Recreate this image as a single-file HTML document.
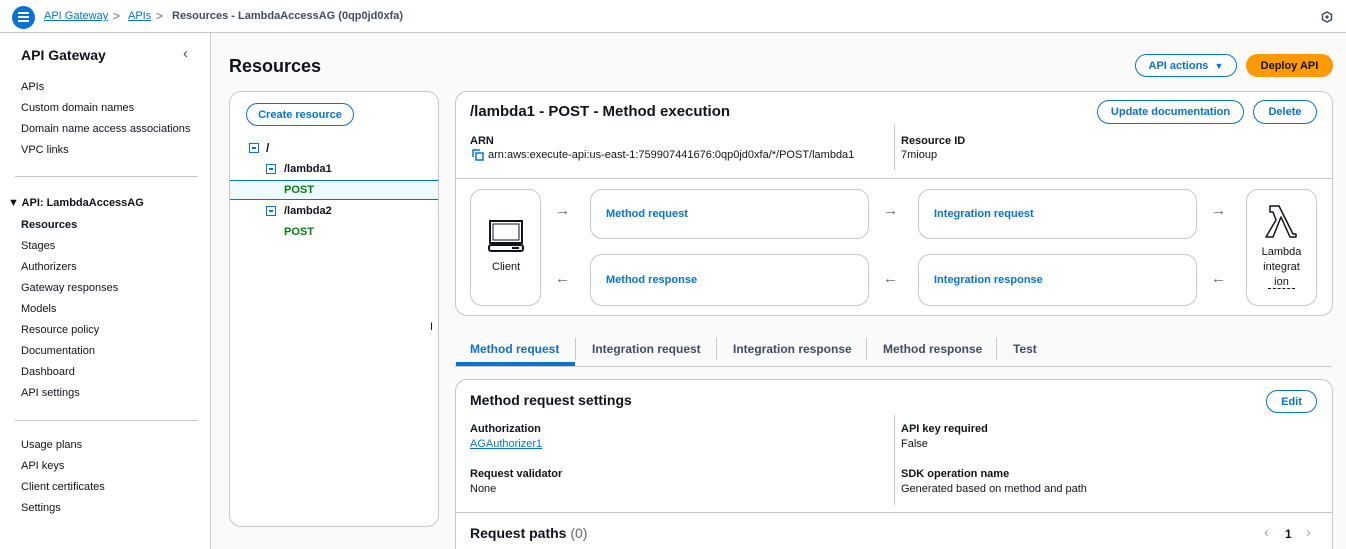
<!DOCTYPE html>
<html style="width:1346px;height:549px;overflow:hidden"><head><meta charset="utf-8"><style>
*{box-sizing:border-box;margin:0;padding:0}
body{width:1346px;height:549px;overflow:hidden;font-family:"Liberation Sans",sans-serif;color:#0f141a;background:#fafafa;position:relative;font-size:11px}
.a{position:absolute;white-space:nowrap}
.b{font-weight:bold}
.blue{color:#0972d3}
.btn{position:absolute;border:1.5px solid #0972d3;border-radius:14px;color:#0972d3;font-weight:bold;font-size:11px;display:flex;align-items:center;justify-content:center;background:#fff}
.box{position:absolute;border:1px solid #c6c6cd;border-radius:12px;background:#fff}
.nav{position:absolute;left:21px;font-size:11px;color:#0f141a}
.flow{position:absolute;border:1px solid #c6c6cd;border-radius:12px;background:#fff}
.fl{position:absolute;left:15px;top:50%;transform:translateY(-50%);color:#0972d3;font-weight:bold;font-size:11px}
.arr{position:absolute;color:#5f6b7a;font-size:15px}
.sq{position:absolute;width:10px;height:10px;border:1.5px solid #0972d3}
.sq:after{content:"";position:absolute;left:1.5px;top:3px;width:4px;height:1.5px;background:#0972d3}
</style></head><body>
<div class="a" style="left:0;top:0;width:1346px;height:33px;background:#fff;border-bottom:1px solid #c6c6cd"></div>
<div class="a" style="left:12px;top:6px;width:23px;height:23px;border-radius:50%;background:#0972d3"></div>
<div class="a" style="left:18px;top:12px;width:11px;height:2px;background:#fff;box-shadow:0 4px 0 #fff,0 8px 0 #fff"></div>
<div class="a blue" style="left:44px;top:10px;font-size:11px;text-decoration:underline">API Gateway</div>
<div class="a" style="left:113px;top:9px;color:#656871;font-size:12px">&gt;</div>
<div class="a blue" style="left:128px;top:10px;font-size:11px;text-decoration:underline">APIs</div>
<div class="a" style="left:156px;top:9px;color:#656871;font-size:12px">&gt;</div>
<div class="a" style="left:172px;top:10px;font-size:11px;color:#414d5c;font-weight:bold">Resources - LambdaAccessAG (0qp0jd0xfa)</div>
<svg class="a" style="left:1321px;top:11px" width="12" height="12" viewBox="0 0 12 12"><path d="M6 1l4.5 2.5v5L6 11 1.5 8.5v-5z" fill="none" stroke="#414d5c" stroke-width="1.5"/><circle cx="6" cy="6" r="1.6" fill="#414d5c"/></svg>

<div class="a" style="left:0;top:33px;width:211px;height:516px;background:#fff;border-right:1px solid #c6c6cd"></div>
<div class="a b" style="left:21px;top:47px;font-size:14px">API Gateway</div>
<div class="a" style="left:183px;top:45px;font-size:15px;color:#414d5c">&#8249;</div>
<div class="nav" style="top:81px">APIs</div>
<div class="nav" style="top:102px">Custom domain names</div>
<div class="nav" style="top:123px">Domain name access associations</div>
<div class="nav" style="top:144px">VPC links</div>
<div class="a" style="left:15px;top:176px;width:183px;height:1px;background:#c6c6cd"></div>
<div class="a b" style="left:8px;top:197px;font-size:11px">▼ API: LambdaAccessAG</div>
<div class="nav b blue" style="top:219px">Resources</div>
<div class="nav" style="top:240px">Stages</div>
<div class="nav" style="top:261px">Authorizers</div>
<div class="nav" style="top:282px">Gateway responses</div>
<div class="nav" style="top:303px">Models</div>
<div class="nav" style="top:324px">Resource policy</div>
<div class="nav" style="top:345px">Documentation</div>
<div class="nav" style="top:366px">Dashboard</div>
<div class="nav" style="top:387px">API settings</div>
<div class="a" style="left:15px;top:420px;width:183px;height:1px;background:#c6c6cd"></div>
<div class="nav" style="top:439px">Usage plans</div>
<div class="nav" style="top:460px">API keys</div>
<div class="nav" style="top:481px">Client certificates</div>
<div class="nav" style="top:502px">Settings</div>

<div class="a b" style="left:229px;top:56px;font-size:18px">Resources</div>
<div class="btn" style="left:1135px;top:54px;width:102px;height:23px">API actions&nbsp;&nbsp;<span style="font-size:9px">▼</span></div>
<div class="btn" style="left:1246px;top:54px;width:87px;height:23px;background:#ff9900;border-color:#ff9900;color:#0f141a">Deploy API</div>

<div class="box" style="left:229px;top:91px;width:210px;height:436px"></div>
<div class="btn" style="left:246px;top:103px;width:108px;height:23px">Create resource</div>
<div class="sq" style="left:249px;top:143px"></div><div class="a b" style="left:266px;top:141px;font-size:12px">/</div>
<div class="sq" style="left:266px;top:164px"></div><div class="a b" style="left:284px;top:163px;font-size:11px">/lambda1</div>
<div class="a" style="left:230px;top:180px;width:208px;height:20px;background:#f0fbff;border-top:1px solid #0972d3;border-bottom:1px solid #0972d3"></div>
<div class="a b" style="left:284px;top:184px;color:#037f0c">POST</div>
<div class="sq" style="left:266px;top:206px"></div><div class="a b" style="left:284px;top:205px;font-size:11px">/lambda2</div>
<div class="a b" style="left:284px;top:226px;color:#037f0c">POST</div>
<div class="a" style="left:430px;top:321px;font-size:11px">I</div>

<div class="box" style="left:455px;top:91px;width:878px;height:225px"></div>
<div class="a b" style="left:470px;top:103px;font-size:15px">/lambda1 - POST - Method execution</div>
<div class="btn" style="left:1097px;top:100px;width:147px;height:24px">Update documentation</div>
<div class="btn" style="left:1253px;top:100px;width:64px;height:24px">Delete</div>
<div class="a b" style="left:470px;top:135px">ARN</div>
<svg class="a" style="left:472px;top:149px" width="12" height="12"><path d="M1 8V1h7" fill="none" stroke="#0972d3" stroke-width="1.5"/><rect x="4" y="4" width="7" height="7" fill="none" stroke="#0972d3" stroke-width="1.5"/></svg>
<div class="a" style="left:488px;top:149px">arn:aws:execute-api:us-east-1:759907441676:0qp0jd0xfa/*/POST/lambda1</div>
<div class="a" style="left:894px;top:125px;width:1px;height:45px;background:#c6c6cd"></div>
<div class="a b" style="left:901px;top:135px">Resource ID</div>
<div class="a" style="left:901px;top:149px">7mioup</div>
<div class="a" style="left:456px;top:178px;width:876px;height:1px;background:#c6c6cd"></div>
<div class="flow" style="left:470px;top:189px;width:71px;height:117px"></div>
<svg class="a" style="left:488px;top:219px" width="36" height="34" viewBox="0 0 36 34"><rect x="2" y="2" width="32" height="22" fill="none" stroke="#0f141a" stroke-width="2"/><rect x="5" y="5" width="26" height="16" fill="none" stroke="#0f141a" stroke-width="1"/><rect x="1" y="26" width="34" height="6" rx="2" fill="none" stroke="#0f141a" stroke-width="2"/><rect x="24" y="28" width="7" height="2" fill="#0f141a"/></svg>
<div class="a" style="left:492px;top:261px">Client</div>
<div class="flow" style="left:590px;top:189px;width:279px;height:50px"><span class="fl">Method request</span></div>
<div class="flow" style="left:590px;top:254px;width:279px;height:52px"><span class="fl">Method response</span></div>
<div class="flow" style="left:918px;top:189px;width:279px;height:50px"><span class="fl">Integration request</span></div>
<div class="flow" style="left:918px;top:254px;width:279px;height:52px"><span class="fl">Integration response</span></div>
<div class="flow" style="left:1246px;top:189px;width:71px;height:117px"></div>
<svg class="a" style="left:1265px;top:204px" width="33" height="35" viewBox="0 0 33 35"><path d="M5 2h9l14 28h3v3h-6L16 13 8 33H1l10-17-3-8H5z" fill="none" stroke="#0f141a" stroke-width="1.5" stroke-linejoin="round"/></svg>
<div class="a" style="left:1246px;top:245px;width:71px;text-align:center;line-height:15px;white-space:normal;padding:0 13px">Lambda integrat <span style="border-bottom:1px dashed #0f141a;padding:0 6px">ion</span></div>
<div class="arr" style="left:555px;top:202px">→</div><div class="arr" style="left:555px;top:270px">←</div>
<div class="arr" style="left:883px;top:202px">→</div><div class="arr" style="left:883px;top:270px">←</div>
<div class="arr" style="left:1211px;top:202px">→</div><div class="arr" style="left:1211px;top:270px">←</div>

<div class="a" style="left:454px;top:366px;width:878px;height:1px;background:#c6c6cd"></div>
<div class="a" style="left:456px;top:362px;width:119px;height:4px;background:#0972d3"></div>
<div class="a b blue" style="left:470px;top:342px;font-size:12px">Method request</div>
<div class="a" style="left:575px;top:338px;width:1px;height:22px;background:#c6c6cd"></div>
<div class="a b" style="left:592px;top:342px;font-size:12px;color:#414d5c">Integration request</div>
<div class="a" style="left:716px;top:338px;width:1px;height:22px;background:#c6c6cd"></div>
<div class="a b" style="left:733px;top:342px;font-size:12px;color:#414d5c">Integration response</div>
<div class="a" style="left:866px;top:338px;width:1px;height:22px;background:#c6c6cd"></div>
<div class="a b" style="left:883px;top:342px;font-size:12px;color:#414d5c">Method response</div>
<div class="a" style="left:996px;top:338px;width:1px;height:22px;background:#c6c6cd"></div>
<div class="a b" style="left:1013px;top:342px;font-size:12px;color:#414d5c">Test</div>

<div class="box" style="left:455px;top:379px;width:878px;height:190px"></div>
<div class="a b" style="left:470px;top:392px;font-size:14px">Method request settings</div>
<div class="btn" style="left:1266px;top:390px;width:51px;height:23px">Edit</div>
<div class="a b" style="left:470px;top:423px">Authorization</div>
<div class="a blue" style="left:470px;top:438px;text-decoration:underline">AGAuthorizer1</div>
<div class="a b" style="left:470px;top:468px">Request validator</div>
<div class="a" style="left:470px;top:483px">None</div>
<div class="a" style="left:894px;top:415px;width:1px;height:90px;background:#c6c6cd"></div>
<div class="a b" style="left:901px;top:423px">API key required</div>
<div class="a" style="left:901px;top:438px">False</div>
<div class="a b" style="left:901px;top:468px">SDK operation name</div>
<div class="a" style="left:901px;top:483px">Generated based on method and path</div>
<div class="a" style="left:456px;top:512px;width:876px;height:1px;background:#c6c6cd"></div>
<div class="a b" style="left:470px;top:525px;font-size:14px">Request paths <span style="font-weight:normal;color:#656871">(0)</span></div>
<div class="a" style="left:1264px;top:524px;font-size:15px;color:#9ba7b6">&#8249;</div>
<div class="a b" style="left:1285px;top:527px;font-size:12px">1</div>
<div class="a" style="left:1306px;top:524px;font-size:15px;color:#9ba7b6">&#8250;</div>
</body></html>
